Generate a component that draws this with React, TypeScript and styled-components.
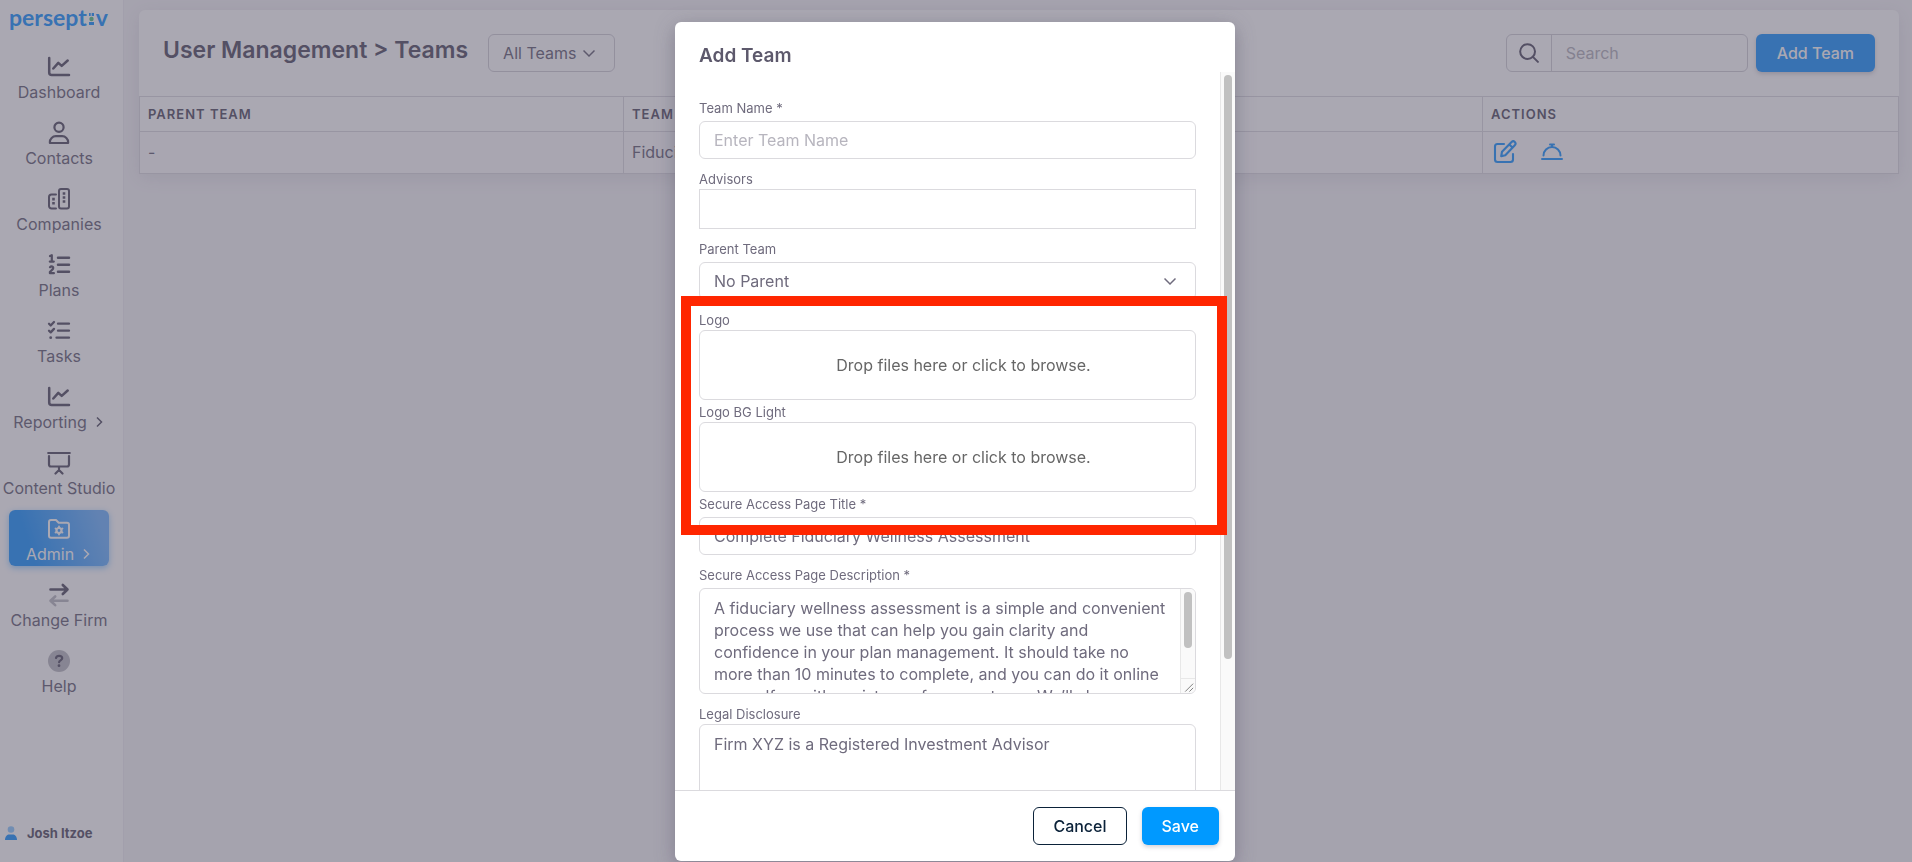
import React from 'react';
import styled, { createGlobalStyle, css } from 'styled-components';

const GlobalStyle = createGlobalStyle`
  *, *::before, *::after { box-sizing: border-box; }
  body {
    margin: 0;
    overflow: hidden;
    background: #f6f5f8;
    color: #6f6b7d;
    font-family: Inter, "Liberation Sans", sans-serif;
    font-size: 16px;
    line-height: 22px;
  }
  button, input, select, textarea { font: inherit; color: inherit; }
`;

/* ---------- Shell ---------- */

const Shell = styled.div`
  display: flex;
  min-height: 100vh;
`;

const Sidebar = styled.aside`
  flex: none;
  display: flex;
  flex-direction: column;
  width: 124px;
  padding: 3px 14px 18px 9px;
  background: #fff;
  border-right: 1px solid #f0eff3;
`;

const Logo = styled.a`
  display: flex;
  align-items: center;
  gap: 2px;
  height: 28px;
  margin-bottom: 17px;
  color: #2899ff;
  font-family: Lato, sans-serif;
  font-size: 23px;
  font-weight: 700;
  line-height: 28px;
  text-decoration: none;
  svg { flex: none; margin-top: 3px; }
`;

const Nav = styled.nav`
  display: flex;
  flex-direction: column;
  gap: 10px;
`;

const NavLink = styled.a<{ $active?: boolean }>`
  display: flex;
  flex-direction: column;
  align-items: center;
  gap: 2px;
  height: 56px;
  padding-top: 7px;
  border-radius: 6px;
  color: #6f6b7d;
  text-decoration: none;
  white-space: nowrap;
  svg { flex: none; color: #5d596c; }
  ${(p) =>
    p.$active &&
    css`
      color: #fff;
      background: linear-gradient(72deg, #2899ff 22%, #77b8ff 90%);
      box-shadow: 0 2px 6px rgba(40, 153, 255, 0.48);
      svg { color: #fff; }
    `}
`;

const NavText = styled.span`
  display: flex;
  align-items: center;
  gap: 6px;
`;

const User = styled.a`
  display: flex;
  align-items: center;
  gap: 10px;
  margin: auto 0 0 -4px;
  color: #5d596c;
  font-size: 13px;
  font-weight: 700;
  text-decoration: none;
`;

const Main = styled.main`
  flex: 1;
  min-width: 0;
  padding: 10px 13px 0 15px;
`;

const Card = styled.section`
  border-radius: 6px;
  background: #fff;
  box-shadow: 0 4px 18px rgba(75, 70, 92, 0.1);
`;

const CardHeader = styled.header`
  display: flex;
  align-items: flex-start;
  gap: 20px;
  height: 86px;
  padding: 24px 24px 0;
`;

const PageTitle = styled.h1`
  margin: 0;
  color: #5d596c;
  font-size: 23px;
  font-weight: 600;
  line-height: 32px;
`;

const SelectBox = styled.div<{ $wide?: boolean }>`
  display: grid;
  align-items: center;
  width: ${(p) => (p.$wide ? '100%' : '127px')};
  select, svg { grid-area: 1 / 1; }
  select {
    appearance: none;
    width: 100%;
    height: 38px;
    padding: 0 ${(p) => (p.$wide ? '40px' : '34px')} 0 14px;
    border: 1px solid ${(p) => (p.$wide ? '#dbdade' : '#d3d1d8')};
    border-radius: 6px;
    background: transparent;
    outline: 0;
  }
  svg {
    justify-self: end;
    margin-right: 20px;
    pointer-events: none;
  }
`;

const SearchGroup = styled.label`
  display: flex;
  align-items: center;
  width: 242px;
  height: 38px;
  margin-left: auto;
  border: 1px solid #d3d1d8;
  border-radius: 6px;
  overflow: hidden;
  svg { flex: none; margin: 0 12px; color: #5d596c; }
  input {
    flex: 1;
    min-width: 0;
    height: 36px;
    padding: 0 14px;
    border: 0;
    border-left: 1px solid #d3d1d8;
    background: transparent;
    outline: 0;
  }
  input::placeholder { color: #b7b5be; }
`;

const Button = styled.button<{ $outline?: boolean; $page?: boolean }>`
  height: 38px;
  padding: 0 ${(p) => (p.$page ? '20px' : '19px')};
  border: 1px solid ${(p) => (p.$outline ? '#0b2239' : 'transparent')};
  border-radius: 6px;
  background: ${(p) => (p.$outline ? '#fff' : p.$page ? '#2899ff' : '#0099ff')} border-box;
  color: ${(p) => (p.$outline ? '#0b2239' : '#fff')};
  font-weight: 500;
  box-shadow: ${(p) => (p.$outline ? 'none' : '0 2px 4px rgba(75, 70, 92, 0.25)')};
`;

const HeaderActions = styled.div`
  display: flex;
  flex: 1;
  gap: 8px;
`;

const Table = styled.table`
  width: 100%;
  table-layout: fixed;
  border-collapse: collapse;
  border: 1px solid #d3d1d8;
  th, td {
    padding: 0 8px;
    border: 1px solid #dddbe1;
    text-align: left;
    vertical-align: middle;
  }
  th {
    height: 35px;
    color: #5d596c;
    font-size: 13px;
    font-weight: 600;
    letter-spacing: 1px;
    text-transform: uppercase;
  }
  td { height: 42px; padding-bottom: 2px; background: #fdfcfe; }
  th:nth-child(1) { width: 484px; }
  th:nth-child(3) { width: 416px; }
`;

const RowActions = styled.div`
  display: flex;
  gap: 23px;
  padding: 0 2px;
`;

const IconButton = styled.button`
  display: flex;
  padding: 0;
  border: 0;
  background: none;
  color: #2899ff;
`;

/* ---------- Modal ---------- */

const Backdrop = styled.div`
  position: fixed;
  inset: 0;
  padding: 22px 2px 1px 0;
  background: rgba(75, 70, 92, 0.47);
`;

const Modal = styled.section`
  position: relative;
  display: flex;
  flex-direction: column;
  width: 560px;
  height: 100%;
  margin: 0 auto;
  border-radius: 6px;
  background: #fff;
  box-shadow: 0 5px 20px rgba(75, 70, 92, 0.4);
`;

const ModalHeader = styled.header`
  flex: none;
  height: 50px;
  padding: 22px 24px 0;
  h2 {
    margin: 0;
    color: #5d596c;
    font-size: 19px;
    font-weight: 600;
    line-height: 24px;
  }
`;

const ModalBody = styled.div`
  display: flex;
  flex: 1;
  min-height: 0;
`;

const Form = styled.form`
  flex: 1;
  padding: 27px 24px 24px;
  overflow-y: auto;
  scrollbar-width: none;
`;

const ScrollTrack = styled.div<{ $size: string; $corner?: boolean }>`
  flex: none;
  width: 15px;
  padding: 3px 3px ${(p) => (p.$corner ? '15px' : '3px')} 3px;
  border-left: 1px solid #e8e8e8;
  background: #fafafa;
  &::before {
    content: '';
    display: block;
    height: ${(p) => p.$size};
    width: 8px;
    border-radius: 4px;
    background: #c1c1c1;
  }
`;

const Field = styled.div<{ $tight?: boolean; $close?: boolean }>`
  display: flex;
  flex-direction: column;
  gap: ${(p) => (p.$tight ? '1px' : '4px')};
  margin-bottom: ${(p) => (p.$close ? '3px' : '11px')};
`;

const Label = styled.label`
  align-self: flex-start;
  color: #6f6b7d;
  font-size: 13px;
  line-height: 18px;
`;

const fieldFrame = css`
  width: 100%;
  border: 1px solid #dbdade;
  border-radius: 6px;
  background: #fff;
`;

const TextInput = styled.input<{ $square?: boolean }>`
  ${fieldFrame}
  height: ${(p) => (p.$square ? '40px' : '38px')};
  padding: 0 14px;
  border-radius: ${(p) => (p.$square ? '0' : '6px')};
  outline: 0;
  &::placeholder { color: #b7b5be; }
`;

const DropZone = styled.label`
  ${fieldFrame}
  display: flex;
  align-items: center;
  justify-content: center;
  height: 70px;
  padding-left: 32px;
  color: #666;
`;

const FileInput = styled.input`
  width: 1px;
  height: 1px;
  margin: 0 -1px 0 0;
  opacity: 0;
`;

const AreaFrame = styled.div`
  ${fieldFrame}
  position: relative;
  display: flex;
  height: 106px;
  overflow: hidden;
`;

const TextArea = styled.textarea`
  flex: 1;
  min-width: 0;
  padding: 8px 10px 0 14px;
  border: 0;
  background: transparent;
  outline: 0;
  resize: none;
  scrollbar-width: none;
  line-height: 22px;
`;

const ResizeCorner = styled.svg`
  position: absolute;
  right: 0;
  bottom: 0;
  border-top: 1px solid #e8e8e8;
`;

const ModalFooter = styled.footer`
  flex: none;
  display: flex;
  justify-content: flex-end;
  gap: 15px;
  padding: 16px;
  border-top: 1px solid #dbdade;
`;

const Highlight = styled.div`
  position: absolute;
  top: 274px;
  left: 6px;
  width: 546px;
  height: 239px;
  border: 10px solid #ff2600;
  pointer-events: none;
`;

/* ---------- Icons ---------- */

const Icon = ({ size = 24, width = 2, children }: { size?: number; width?: number; children: React.ReactNode }) => (
  <svg
    width={size}
    height={size}
    viewBox="0 0 24 24"
    fill="none"
    stroke="currentColor"
    strokeWidth={width}
    strokeLinecap="round"
    strokeLinejoin="round"
    aria-hidden="true"
  >
    {children}
  </svg>
);

const ChartIcon = () => (
  <Icon width={2.5}>
    <path d="M2.200 3v14.500A2.500 2.500 0 0 0 4.700 20H22" />
    <path d="M6.300 13.500l5-5.600 3.400 3 6-5.400" />
  </Icon>
);
const PersonIcon = () => (
  <Icon width={2.2}>
    <circle cx="12" cy="6.300" r="4.600" />
    <path d="M8.800 15.200h6.400a5.900 5.900 0 0 1 5.900 5.900v.9H2.900v-.9a5.900 5.900 0 0 1 5.900-5.900z" />
  </Icon>
);
const BuildingsIcon = () => (
  <Icon>
    <rect x="12" y="2" width="10" height="19.500" rx="2" />
    <path d="M9 7.500H4.500a2.500 2.500 0 0 0-2.500 2.500v9a2.500 2.500 0 0 0 2.500 2.500H9" />
    <path
      d="M5.200 10.800h2.600v2.600H5.200zM5.200 15h2.600v2.600H5.200zM15.700 5.200h2.600v2.600h-2.600zM15.700 9.200h2.600v2.600h-2.600zM15.700 13.200h2.600v2.600h-2.600z"
      fill="currentColor"
      stroke="none"
    />
  </Icon>
);
const NumberedIcon = () => (
  <Icon width={2.5}>
    <path d="M11 4.700h11M11 11.700h11M11 18.700h11" />
    <path d="M3 3l1.800-.8v6M2.800 8.600h4" strokeWidth="2.200" />
    <path d="M3 14.200c1.200-1.400 3.800-.6 3.100 1.300-.4 1.100-2 2.300-3.200 3.500v1.200h4" strokeWidth="2.200" />
  </Icon>
);
const ChecklistIcon = () => (
  <Icon width={2.3}>
    <path d="M11 4.700h11M11 11.700h11M9.500 18.700H22" />
    <path d="M2 4.800l1.700 1.700L7 3M2 11.700l1.700 1.700L7 9.900" />
    <path d="M3.700 18.700v.01" strokeWidth="2.800" />
  </Icon>
);
const BoardIcon = () => (
  <Icon width={2.2}>
    <path d="M1.200 2h21.600" />
    <path d="M2 5v8.500a2 2 0 0 0 2 2h16a2 2 0 0 0 2-2V5M12 16v3M8.500 22.500L12 19l3.500 3.500" />
  </Icon>
);
const FolderIcon = () => (
  <Icon>
    <path d="M4 3h5l2.700 2.800H20a2 2 0 0 1 2 2v11a2 2 0 0 1-2 2H4a2 2 0 0 1-2-2V5a2 2 0 0 1 2-2z" />
    <circle cx="12" cy="13.500" r="2.500" strokeWidth="2.200" />
    <path d="M12 9.400v1M12 16.600v1M8.500 11.500l.8.500M14.700 15l.8.500M8.500 15.500l.8-.5M14.700 12l.8-.5" strokeWidth="1.800" />
  </Icon>
);
const SwapIcon = () => (
  <Icon width={2.6}>
    <path d="M3.500 6.500h17M15.800 2l4.700 4.500-4.700 4.500" />
    <path d="M20.500 17.800h-17M8.200 13.500l-4.700 4.300 4.700 4.300" opacity=".4" />
  </Icon>
);
const HelpIcon = () => (
  <Icon width={2.2}>
    <circle cx="12" cy="12" r="11" fill="currentColor" stroke="none" opacity=".4" />
    <path d="M9 8.900c.4-1.600 1.500-2.100 3.100-2.100 1.800 0 3.100.9 3.100 2.500 0 2-3.100 2-3.100 3.900" />
    <path d="M12 16.700v.01" strokeWidth="2.800" />
  </Icon>
);
const SearchIcon = () => (
  <Icon size={20} width={2.4}>
    <circle cx="10.300" cy="10.300" r="8.900" />
    <path d="M16.700 16.700L22.700 22.700" />
  </Icon>
);
const EditIcon = () => (
  <Icon width={2.1}>
    <path d="M11 4H4.500A2.500 2.500 0 0 0 2 6.500v13A2.500 2.500 0 0 0 4.500 22h13a2.500 2.500 0 0 0 2.500-2.500V14" />
    <path d="M8.200 16.300l.8-4.600L18.600 2a2 2 0 0 1 3.200 3.200L12.300 15.300zM16.300 4.500l3.200 3.100" />
  </Icon>
);
const BellIcon = () => (
  <Icon width={2}>
    <path d="M2 19h20M3.500 15.500a8.500 8.500 0 0 1 17 0M12 6.500V4.500M10 4.500h4" />
  </Icon>
);
const Chevron = ({ down }: { down?: boolean }) => (
  <svg width="12" height="12" viewBox="0 0 12 12" fill="none" stroke="currentColor" strokeWidth="1.500" aria-hidden="true">
    <path d={down ? 'M.5 3.500L6 9l5.500-5.500' : 'M4 1.500L8.500 6 4 10.500'} />
  </svg>
);

/* ---------- Page ---------- */

const navItems = [
  { label: 'Dashboard', icon: <ChartIcon /> },
  { label: 'Contacts', icon: <PersonIcon /> },
  { label: 'Companies', icon: <BuildingsIcon /> },
  { label: 'Plans', icon: <NumberedIcon /> },
  { label: 'Tasks', icon: <ChecklistIcon /> },
  { label: 'Reporting', icon: <ChartIcon />, more: true },
  { label: 'Content Studio', icon: <BoardIcon /> },
  { label: 'Admin', icon: <FolderIcon />, more: true, active: true },
  { label: 'Change Firm', icon: <SwapIcon /> },
  { label: 'Help', icon: <HelpIcon /> },
];

const description =
  'A fiduciary wellness assessment is a simple and convenient process we use that can help you gain clarity and confidence in your plan management. It should take no more than 10 minutes to complete, and you can do it online yourself or with assistance from our team. We’ll share your results once complete.';

const DropField = ({ id, label }: { id: string; label: string }) => (
  <Field $tight $close>
    <Label htmlFor={id}>{label}</Label>
    <DropZone>
      <FileInput id={id} type="file" />
      Drop files here or click to browse.
    </DropZone>
  </Field>
);

export default function App() {
  return (
    <>
      <GlobalStyle />
      <Shell>
        <Sidebar>
          <Logo href="#">
            <span>persept</span>
            <svg width="5" height="12" viewBox="0 0 5 12" aria-hidden="true">
              <path d="M0 0h1.700v3H0zM2.700 0h2.300v3H2.700zM0 9h5v3H0z" fill="#2899ff" />
              <circle cx="2.500" cy="6" r="2.200" fill="#5fc48a" />
            </svg>
            <span>v</span>
          </Logo>
          <Nav>
            {navItems.map((item) => (
              <NavLink key={item.label} href="#" $active={item.active}>
                {item.icon}
                <NavText>
                  {item.label}
                  {item.more && <Chevron />}
                </NavText>
              </NavLink>
            ))}
          </Nav>
          <User href="#">
            <svg width="12" height="14" viewBox="0 0 12 14" fill="#2899ff" aria-hidden="true">
              <circle cx="6" cy="3.500" r="3.300" opacity=".5" />
              <path d="M0 14c0-3.500 2-5.500 4.500-5.500h3C10 8.500 12 10.500 12 14z" />
            </svg>
            Josh Itzoe
          </User>
        </Sidebar>
        <Main>
          <Card>
            <CardHeader>
              <PageTitle>User Management &gt; Teams</PageTitle>
              <HeaderActions>
                <SelectBox>
                  <select aria-label="Team filter">
                    <option>All Teams</option>
                  </select>
                  <Chevron down />
                </SelectBox>
                <SearchGroup>
                  <SearchIcon />
                  <input type="search" placeholder="Search" aria-label="Search" />
                </SearchGroup>
                <Button $page>Add Team</Button>
              </HeaderActions>
            </CardHeader>
            <Table>
              <thead>
                <tr>
                  <th>Parent Team</th>
                  <th>Team</th>
                  <th>Actions</th>
                </tr>
              </thead>
              <tbody>
                <tr>
                  <td>-</td>
                  <td>Fiduciary</td>
                  <td>
                    <RowActions>
                      <IconButton aria-label="Edit team"><EditIcon /></IconButton>
                      <IconButton aria-label="Team services"><BellIcon /></IconButton>
                    </RowActions>
                  </td>
                </tr>
              </tbody>
            </Table>
          </Card>
        </Main>
      </Shell>
      <Backdrop>
        <Modal role="dialog" aria-labelledby="modal-title">
          <ModalHeader>
            <h2 id="modal-title">Add Team</h2>
          </ModalHeader>
          <ModalBody>
            <Form id="team-form">
              <Field>
                <Label htmlFor="name">Team Name *</Label>
                <TextInput id="name" placeholder="Enter Team Name" />
              </Field>
              <Field $tight>
                <Label htmlFor="advisors">Advisors</Label>
                <TextInput id="advisors" $square />
              </Field>
              <Field>
                <Label htmlFor="parent">Parent Team</Label>
                <SelectBox $wide>
                  <select id="parent">
                    <option>No Parent</option>
                  </select>
                  <Chevron down />
                </SelectBox>
              </Field>
              <DropField id="logo" label="Logo" />
              <DropField id="logo-light" label="Logo BG Light" />
              <Field>
                <Label htmlFor="title">Secure Access Page Title *</Label>
                <TextInput id="title" defaultValue="Complete Fiduciary Wellness Assessment" />
              </Field>
              <Field>
                <Label htmlFor="description">Secure Access Page Description *</Label>
                <AreaFrame>
                  <TextArea id="description" defaultValue={description} />
                  <ScrollTrack $size="56px" $corner />
                  <ResizeCorner width="14" height="15" viewBox="0 0 14 15" stroke="#777" aria-hidden="true">
                    <path d="M4 13.500L12.500 5M8.500 13.500l4-4" />
                  </ResizeCorner>
                </AreaFrame>
              </Field>
              <Field $tight>
                <Label htmlFor="legal">Legal Disclosure</Label>
                <AreaFrame>
                  <TextArea id="legal" defaultValue="Firm XYZ is a Registered Investment Advisor" />
                </AreaFrame>
              </Field>
            </Form>
            <ScrollTrack $size="82%" />
          </ModalBody>
          <ModalFooter>
            <Button $outline>Cancel</Button>
            <Button form="team-form">Save</Button>
          </ModalFooter>
          <Highlight />
        </Modal>
      </Backdrop>
    </>
  );
}
